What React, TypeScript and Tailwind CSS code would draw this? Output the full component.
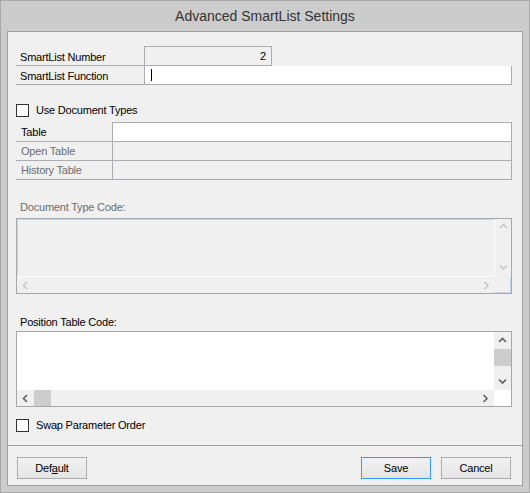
import React from 'react';

const line = 'border-[#abadb3]';

function Chevron({ dir, color }: { dir: 'up' | 'down' | 'left' | 'right'; color: string }) {
  const pts: Record<string, string> = {
    up: '1,5 4.5,1.5 8,5',
    down: '1,1.5 4.5,5 8,1.5',
    left: '5,1 1.5,4.5 5,8',
    right: '1.5,1 5,4.5 1.5,8',
  };
  const horiz = dir === 'up' || dir === 'down';
  return (
    <svg width={horiz ? 9 : 7} height={horiz ? 7 : 9} viewBox={horiz ? '0 0 9 7' : '0 0 7 9'}>
      <polyline points={pts[dir]} fill="none" stroke={color} strokeWidth="1.6" />
    </svg>
  );
}

function Checkbox({ label }: { label: string }) {
  return (
    <div className="flex items-center h-[13px]">
      <div className="w-[13px] h-[13px] border border-[#333333] bg-white" />
      <span className="ml-[7px] text-black">{label}</span>
    </div>
  );
}

function Btn({ children, focused }: { children: React.ReactNode; focused?: boolean }) {
  return (
    <button
      type="button"
      className={`w-[70px] h-[22px] border bg-gradient-to-b from-[#f2f2f2] to-[#e4e4e4] text-black flex items-center justify-center ${
        focused ? 'border-[#3399ff]' : 'border-[#acacac]'
      }`}
    >
      {children}
    </button>
  );
}

export default function App() {
  return (
    <div className="w-[530px] h-[493px] bg-[#cccccc] border border-[#a8a8a8] flex flex-col font-['Liberation_Sans',Arial,sans-serif] text-[11px] tracking-[-0.2px] text-black">
      <div className="h-[30px] flex items-center justify-center text-[14px] tracking-normal text-[#333333]">
        Advanced SmartList Settings
      </div>

      <div className="ml-[6px] w-[516px] h-[455px] border border-[#a0a0a0] bg-[#f0f0f0] flex flex-col">
        <div className="flex-1 pl-[8px] pr-[10px] pt-[14px] flex flex-col">
          {/* SmartList Number / Function */}
          <div className="flex">
            <div className={`w-[128px] h-[20px] border-b ${line} pl-[4px] pt-[3px] flex items-center`}>SmartList Number</div>
            <div className={`w-[128px] h-[20px] border ${line} bg-[#f0f0f0] flex items-center justify-end pr-[5px] pt-[1px]`}>2</div>
          </div>
          <div className="flex">
            <div className={`w-[128px] h-[19px] border-b ${line} pl-[4px] pt-[2px] flex items-center`}>SmartList Function</div>
            <div className={`flex-1 h-[19px] border border-t-0 ${line} bg-white flex items-center pl-[6px]`}>
              <div className="w-px h-[12px] bg-black" />
            </div>
          </div>

          <div className="mt-[19px]">
            <Checkbox label="Use Document Types" />
          </div>

          {/* Tables */}
          <div className="mt-[5px] flex flex-col">
            <div className="flex">
              <div className={`w-[96px] h-[20px] border-b ${line} pl-[5px] pt-[2px] flex items-center`}>Table</div>
              <div className={`flex-1 h-[20px] border ${line} bg-white`} />
            </div>
            <div className="flex">
              <div className={`w-[96px] h-[19px] border-b ${line} pl-[5px] pt-[1px] flex items-center text-[#6d6d6d]`}>Open Table</div>
              <div className={`flex-1 h-[19px] border border-t-0 ${line} bg-[#f0f0f0]`} />
            </div>
            <div className="flex">
              <div className={`w-[96px] h-[19px] border-b ${line} pl-[5px] pt-[1px] flex items-center text-[#6d6d6d]`}>History Table</div>
              <div className={`flex-1 h-[19px] border border-t-0 ${line} bg-[#f0f0f0]`} />
            </div>
          </div>

          {/* Document Type Code (disabled) */}
          <div className="mt-[20px] h-[14px] leading-[14px] pl-[4px] text-[#6d6d6d]">Document Type Code:</div>
          <div className="mt-[4px] h-[76px] border border-[#a8a8a8] flex flex-col">
            <div className="flex h-[58px]">
              <div className="flex-1 border-t border-l border-[#c3d8ee] border-r-white border-b-white border-r border-b" />
              <div className="w-[16px] flex flex-col items-center justify-between pt-[4px] pb-[6px]">
                <Chevron dir="up" color="#c6c6c6" />
                <Chevron dir="down" color="#c6c6c6" />
              </div>
            </div>
            <div className="flex flex-1">
              <div className="flex-1 flex items-center justify-between pl-[5px] pr-[4px]">
                <Chevron dir="left" color="#c6c6c6" />
                <Chevron dir="right" color="#c6c6c6" />
              </div>
              <div className="w-[17px] border-r border-b border-[#c3d8ee]" />
            </div>
          </div>

          {/* Position Table Code */}
          <div className="mt-[21px] h-[14px] leading-[14px] pl-[4px]">Position Table Code:</div>
          <div className="mt-[2px] h-[76px] border border-[#a8a8a8] bg-white flex flex-col">
            <div className="flex h-[58px]">
              <div className="flex-1" />
              <div className="w-[17px] bg-[#f0f0f0] flex flex-col">
                <div className="h-[17px] flex items-center justify-center">
                  <Chevron dir="up" color="#606060" />
                </div>
                <div className="h-[17px] bg-[#cdcdcd]" />
                <div className="flex-1" />
                <div className="h-[17px] flex items-center justify-center">
                  <Chevron dir="down" color="#606060" />
                </div>
              </div>
            </div>
            <div className="flex flex-1">
              <div className="flex-1 bg-[#f0f0f0] flex">
                <div className="w-[17px] flex items-center justify-center">
                  <Chevron dir="left" color="#606060" />
                </div>
                <div className="w-[17px] bg-[#cdcdcd]" />
                <div className="flex-1" />
                <div className="w-[17px] flex items-center justify-center">
                  <Chevron dir="right" color="#606060" />
                </div>
              </div>
              <div className="w-[17px] bg-white" />
            </div>
          </div>

          <div className="mt-[12px]">
            <Checkbox label="Swap Parameter Order" />
          </div>
        </div>

        {/* Footer */}
        <div className="h-[40px] border-t border-[#a0a0a0] pt-[11px] pl-[9px] pr-[11px] flex items-start">
          <Btn>
            Def<span className="underline">a</span>ult
          </Btn>
          <div className="flex-1" />
          <div className="flex gap-[10px]">
            <Btn focused>Save</Btn>
            <Btn>Cancel</Btn>
          </div>
        </div>
      </div>
    </div>
  );
}
